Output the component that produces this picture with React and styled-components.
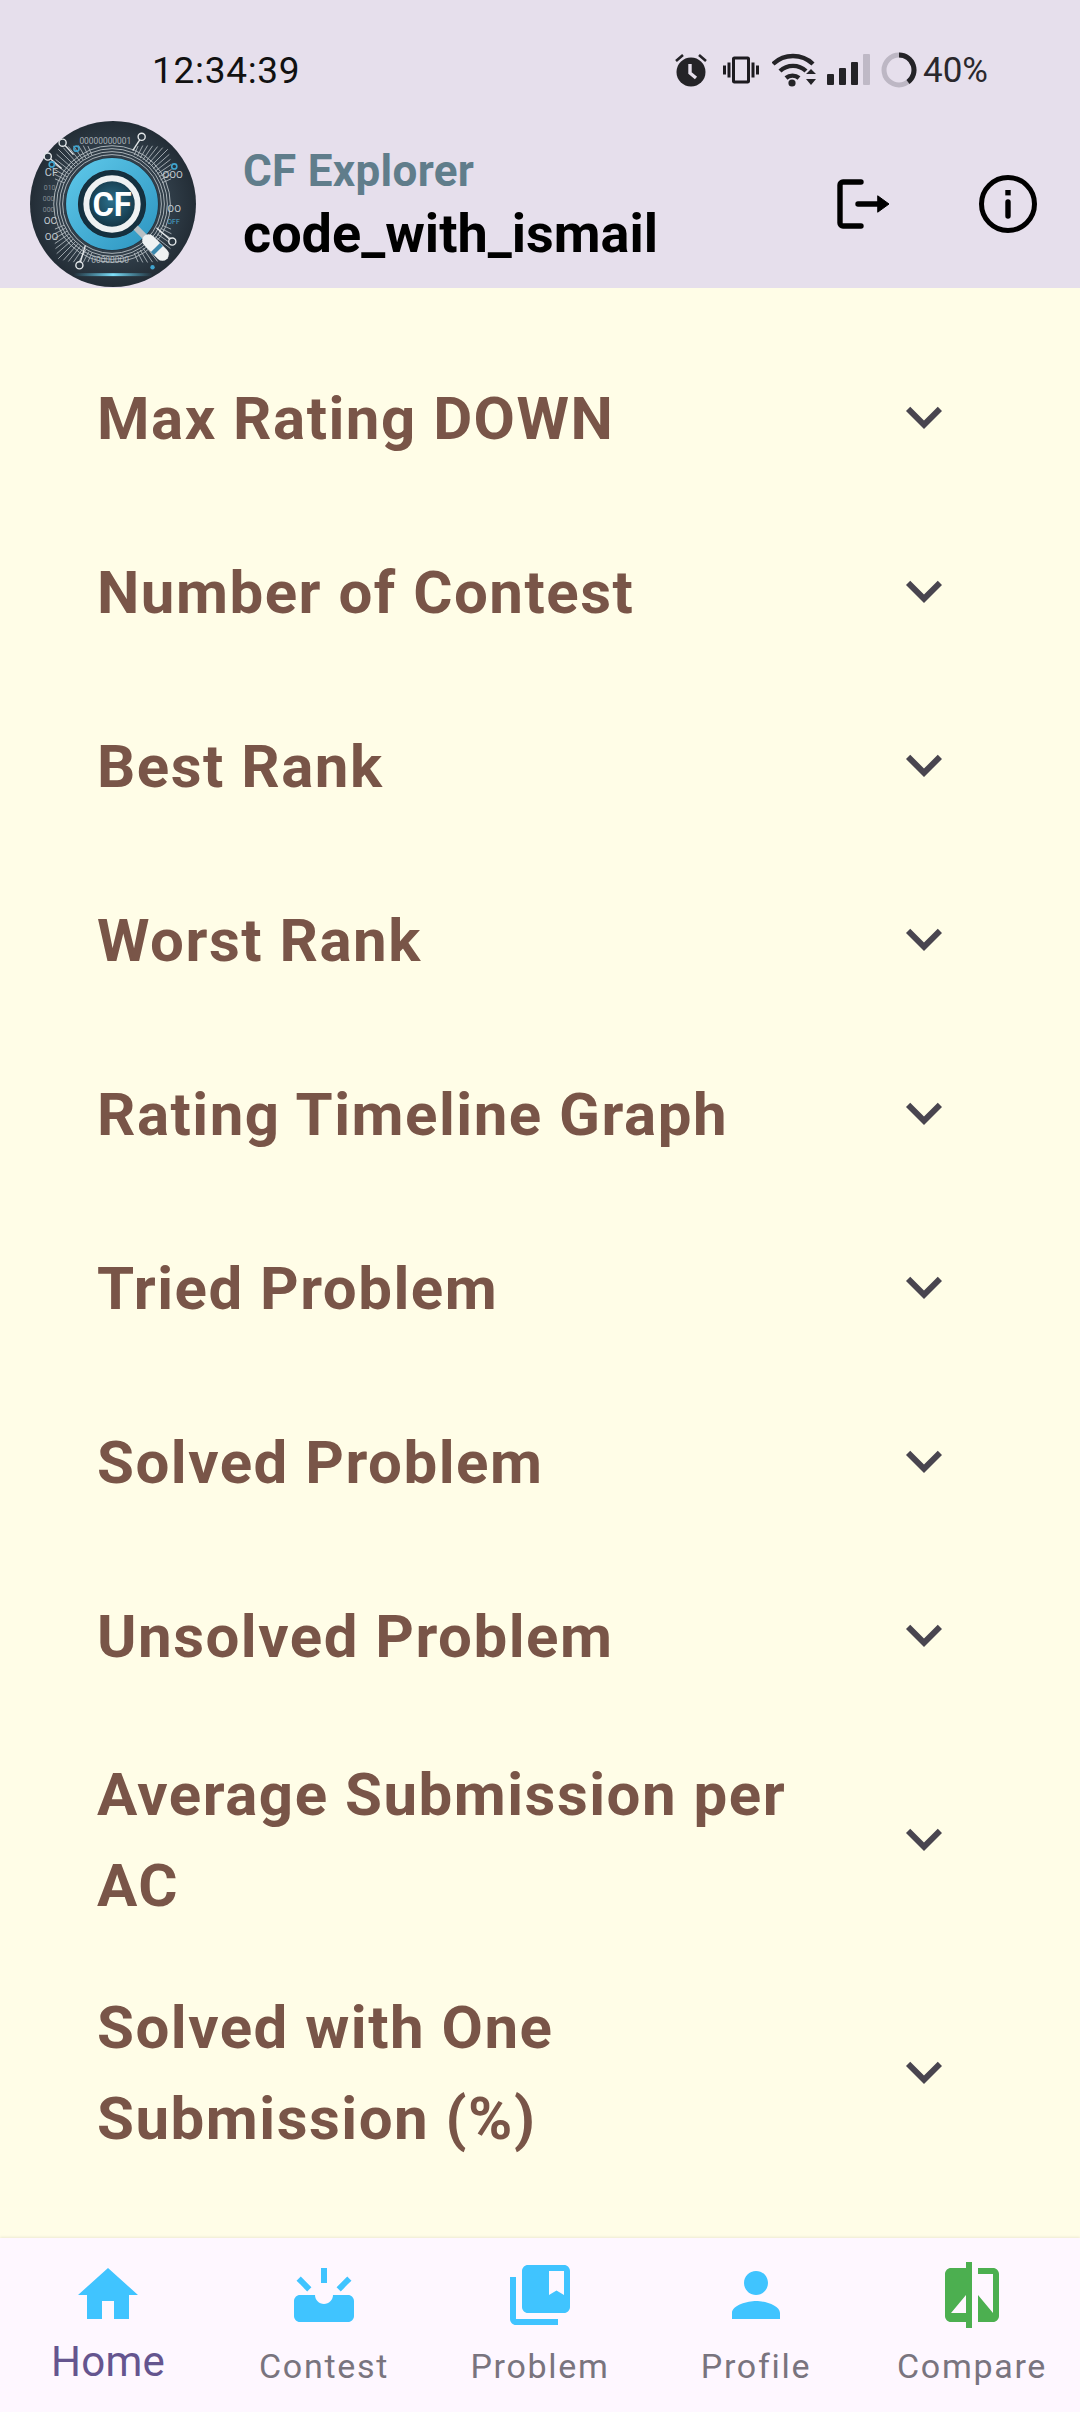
import React from 'react';
import styled, { createGlobalStyle } from 'styled-components';
import {
  MdHome,
  MdUpcoming,
  MdCollectionsBookmark,
  MdPerson,
  MdCompare,
  MdExpandMore,
  MdVibration,
} from 'react-icons/md';

const GlobalStyle = createGlobalStyle`
  html, body { margin: 0; padding: 0; }
  body { font-family: Roboto, "Liberation Sans", sans-serif; background: #fffde7; }
`;

const Page = styled.div`
  width: 1080px;
  height: 2412px;
  display: flex;
  flex-direction: column;
  overflow: hidden;
`;

const Top = styled.header`
  background: #e6dfec;
  height: 288px;
  flex: none;
`;

const StatusBar = styled.div`
  height: 100px;
  padding: 20px 92px 0 152px;
  display: flex;
  align-items: center;
  justify-content: space-between;
  color: #1d1b20;
`;

const Clock = styled.span`
  font-size: 37px;
  letter-spacing: 0.7px;
  color: #111;
`;

const StatusIcons = styled.div`
  display: flex;
  align-items: center;
`;

const StatusIcon = styled.svg`
  display: block;
  flex: none;
  margin-right: ${(p) => p.$gap}px;
`;

const VibrateIcon = styled(MdVibration)`
  display: block;
  flex: none;
  margin: 0 13px 0 -2px;
  color: #1d1b20;
`;

const Battery = styled.span`
  font-size: 35px;
  color: #2a282d;
`;

const AppBar = styled.div`
  height: 168px;
  padding: 0 36px 0 30px;
  display: flex;
  align-items: center;
`;

const LogoWrap = styled.div`
  width: 166px;
  height: 168px;
  flex: none;
  margin-right: 47px;
`;

const Titles = styled.div`
  flex: 1;
  display: flex;
  flex-direction: column;
  margin-top: -2px;
`;

const AppName = styled.div`
  font-size: 44px;
  font-weight: 700;
  line-height: 62px;
  letter-spacing: 0.3px;
  color: #607d8b;
`;

const UserName = styled.div`
  font-size: 54px;
  font-weight: 700;
  line-height: 64px;
  color: #000;
`;

const Actions = styled.div`
  display: flex;
  gap: 72px;
`;

const ActionIcon = styled.svg`
  display: block;
  width: 72px;
  height: 72px;
`;

const List = styled.main`
  flex: 1;
  padding-top: 42px;
  overflow: hidden;
`;

const Row = styled.div`
  min-height: 174px;
  box-sizing: border-box;
  padding: 24px 120px 24px 97px;
  display: flex;
  align-items: center;
  gap: 48px;
`;

const RowTitle = styled.div`
  flex: 1;
  padding-top: 3px;
  font-size: 60px;
  font-weight: 700;
  line-height: 91px;
  letter-spacing: 1.5px;
  color: #795548;
`;

const Chevron = styled(MdExpandMore)`
  flex: none;
  width: 72px;
  height: 72px;
  color: #49454f;
`;

const Nav = styled.nav`
  height: 174px;
  flex: none;
  background: #fef7ff;
  display: grid;
  grid-template-columns: repeat(5, 216px);
  box-shadow: 0 -1px 2px rgba(120, 110, 80, 0.12);
`;

const NavItem = styled.div`
  display: flex;
  flex-direction: column;
  align-items: center;
  padding-top: 21px;
  color: ${(p) => p.$color};

  svg {
    display: block;
    width: 72px;
    height: 72px;
    flex: none;
  }
`;

const NavLabel = styled.span`
  font-size: ${(p) => (p.$active ? 42 : 34)}px;
  letter-spacing: ${(p) => (p.$active ? 0.3 : 1.7)}px;
  line-height: 50px;
  margin-top: ${(p) => (p.$active ? 6 : 10)}px;
  color: ${(p) => (p.$active ? '#65558f' : '#79747e')};
`;

const rows = [
  'Max Rating DOWN',
  'Number of Contest',
  'Best Rank',
  'Worst Rank',
  'Rating Timeline Graph',
  'Tried Problem',
  'Solved Problem',
  'Unsolved Problem',
  'Average Submission per AC',
  'Solved with One Submission (%)',
];

const tabs = [
  { label: 'Home', Icon: MdHome, color: '#40c4ff', active: true },
  { label: 'Contest', Icon: MdUpcoming, color: '#40c4ff' },
  { label: 'Problem', Icon: MdCollectionsBookmark, color: '#40c4ff' },
  { label: 'Profile', Icon: MdPerson, color: '#40c4ff' },
  { label: 'Compare', Icon: MdCompare, color: '#4caf50' },
];

// hatch lines in the four diagonals of the logo
function hatch() {
  const out = [];
  [45, 135, 225, 315].forEach((mid) => {
    for (let i = -6; i <= 6; i++) {
      const a = ((mid + i * 3.6) * Math.PI) / 180;
      const r2 = 64 + (6 - Math.abs(i)) * 2.4;
      out.push(
        <line
          key={`${mid}${i}`}
          x1={84 + 54 * Math.cos(a)}
          y1={84 + 54 * Math.sin(a)}
          x2={84 + r2 * Math.cos(a)}
          y2={84 + r2 * Math.sin(a)}
          stroke="#aeb6bb"
          strokeWidth="0.9"
        />,
      );
    }
  });
  return out;
}

const nodes = [
  [33, 22, 44, 34],
  [113, 16, 104, 30],
  [18, 36, 32, 48],
  [144, 122, 128, 108],
  [50, 146, 56, 126],
];

const Logo = () => (
  <svg width="166" height="168" viewBox="0 0 168 168">
    <defs>
      <radialGradient id="bg" cx="50%" cy="50%" r="50%">
        <stop offset="0%" stopColor="#3c4a55" />
        <stop offset="70%" stopColor="#2f3c47" />
        <stop offset="100%" stopColor="#232d36" />
      </radialGradient>
      <linearGradient id="ring" x1="0" y1="0" x2="1" y2="1">
        <stop offset="0%" stopColor="#5cc6e8" />
        <stop offset="100%" stopColor="#2f97c2" />
      </linearGradient>
      <radialGradient id="lens" cx="50%" cy="45%" r="55%">
        <stop offset="0%" stopColor="#2b6f8b" />
        <stop offset="100%" stopColor="#12303f" />
      </radialGradient>
      <linearGradient id="glow" x1="0" y1="0" x2="1" y2="0">
        <stop offset="0%" stopColor="#4fc3e8" stopOpacity="0" />
        <stop offset="50%" stopColor="#7fe0fa" />
        <stop offset="100%" stopColor="#4fc3e8" stopOpacity="0" />
      </linearGradient>
    </defs>
    <circle cx="84" cy="84" r="84" fill="url(#bg)" />
    {hatch()}
    {[50, 53, 56, 59].map((r) => (
      <circle key={r} cx="83" cy="84" r={r} fill="none" stroke="#b9c1c6" strokeWidth="0.9" />
    ))}
    {nodes.map(([x, y, x2, y2]) => (
      <g key={`${x}${y}`} stroke="#e4e8ea" strokeWidth="1.4" fill="none">
        <line x1={x} y1={y} x2={x2} y2={y2} />
        <circle cx={x} cy={y} r="3.6" fill="#2a3640" />
      </g>
    ))}
    <g fontFamily="Roboto, sans-serif" fill="#c5ccd1">
      <text x="50" y="23" fontSize="8.5" opacity="0.8">00000000001</text>
      <text x="15" y="56" fontSize="11">CF</text>
      <text x="14" y="70" fontSize="7" opacity="0.55">010</text>
      <text x="13" y="81" fontSize="7" opacity="0.55">000</text>
      <text x="13" y="92" fontSize="7" opacity="0.55">000</text>
      <text x="14" y="104" fontSize="10">OC</text>
      <text x="15" y="120" fontSize="10">OO</text>
      <text x="134" y="58" fontSize="10">OOO</text>
      <text x="139" y="92" fontSize="10">OO</text>
      <text x="139" y="104" fontSize="7" fill="#4aa8cf">OFF</text>
      <text x="62" y="144" fontSize="8.5" opacity="0.8">00000000</text>
    </g>
    <circle cx="47" cy="28" r="2.6" fill="none" stroke="#3fa4cf" strokeWidth="1.6" />
    <circle cx="22" cy="44" r="2.6" fill="none" stroke="#3fa4cf" strokeWidth="1.6" />
    <circle cx="146" cy="46" r="2.6" fill="none" stroke="#3fa4cf" strokeWidth="1.6" />
    <circle cx="124" cy="148" r="2.2" fill="#3fa4cf" />
    <circle cx="83" cy="84" r="47" fill="#1b2a35" />
    <circle cx="83" cy="84" r="40.5" fill="none" stroke="url(#ring)" strokeWidth="12" />
    <circle cx="83" cy="84" r="34" fill="#14303f" />
    <line x1="107" y1="108" x2="120" y2="121" stroke="#b7c0c5" strokeWidth="6" />
    <line x1="120" y1="121" x2="134" y2="135" stroke="#eef1f2" strokeWidth="13" strokeLinecap="round" />
    <line x1="127" y1="128" x2="130" y2="131" stroke="#3b88ad" strokeWidth="13" />
    <circle cx="83" cy="84" r="26" fill="url(#lens)" stroke="#eef1f2" strokeWidth="6" />
    <text
      x="83"
      y="96"
      textAnchor="middle"
      fontFamily="Roboto, sans-serif"
      fontWeight="700"
      fontSize="33"
      fill="#fff"
    >
      CF
    </text>
    <rect x="44" y="154" width="80" height="3" fill="url(#glow)" />
  </svg>
);

const App = () => (
  <Page>
    <GlobalStyle />
    <Top>
      <StatusBar>
        <Clock>12:34:39</Clock>
        <StatusIcons>
          <StatusIcon width="32" height="34" viewBox="0 0 32 34" $gap={18}>
            <circle cx="16" cy="19" r="14.5" fill="#242327" />
            <path d="M15 11v9l6 5" fill="none" stroke="#e6dfec" strokeWidth="3.4" />
            <path d="M1 8l7-6M31 8l-7-6" stroke="#242327" strokeWidth="2.6" fill="none" />
          </StatusIcon>
          <VibrateIcon size={36} />
          <StatusIcon width="44" height="34" viewBox="0 0 44 34" $gap={11}>
            <g fill="none" stroke="#242327" strokeWidth="4.4">
              <path d="M1 11a29 29 0 0 1 40 0" />
              <path d="M8 18a19 19 0 0 1 26 0" />
              <path d="M14 25a10 10 0 0 1 13 0" />
            </g>
            <circle cx="20" cy="30" r="3.6" fill="#242327" />
            <path d="M34 21l5-5 5 5zM34 26l5 6 5-6z" fill="#242327" />
          </StatusIcon>
          <StatusIcon width="44" height="32" viewBox="0 0 44 32" $gap={10}>
            <rect x="0" y="20" width="7" height="11" rx="1" fill="#242327" />
            <rect x="12" y="14" width="7" height="17" rx="1" fill="#242327" />
            <rect x="24" y="8" width="7" height="23" rx="1" fill="#242327" />
            <rect x="36" y="0" width="7" height="31" rx="1" fill="#bfb9c6" />
          </StatusIcon>
          <StatusIcon width="36" height="36" viewBox="0 0 36 36" $gap={6}>
            <circle cx="18" cy="18" r="15" fill="none" stroke="#bdb7c4" strokeWidth="5" />
            <path d="M18 3a15 15 0 0 1 9 27" fill="none" stroke="#242327" strokeWidth="5" />
          </StatusIcon>
          <Battery>40%</Battery>
        </StatusIcons>
      </StatusBar>
      <AppBar>
        <LogoWrap>
          <Logo />
        </LogoWrap>
        <Titles>
          <AppName>CF Explorer</AppName>
          <UserName>code_with_ismail</UserName>
        </Titles>
        <Actions>
          <ActionIcon viewBox="0 0 72 72" fill="none" stroke="#000" strokeWidth="5.4" strokeLinecap="round" strokeLinejoin="round">
            <path d="M33 14H15a3 3 0 0 0-3 3v38a3 3 0 0 0 3 3h18" />
            <path d="M30 36h24" />
            <path d="M50 28l11 8-11 8z" fill="#000" strokeWidth="1" />
          </ActionIcon>
          <ActionIcon viewBox="0 0 72 72" fill="none" stroke="#000" strokeWidth="5">
            <circle cx="36" cy="36" r="26.5" />
            <path d="M36 34v14" strokeWidth="5.4" strokeLinecap="round" />
            <path d="M33.3 22h5.4v5.4h-5.4z" fill="#000" stroke="none" />
          </ActionIcon>
        </Actions>
      </AppBar>
    </Top>
    <List>
      {rows.map((title) => (
        <Row key={title}>
          <RowTitle>{title}</RowTitle>
          <Chevron />
        </Row>
      ))}
    </List>
    <Nav>
      {tabs.map(({ label, Icon, color, active }) => (
        <NavItem key={label} $color={color}>
          <Icon />
          <NavLabel $active={active}>{label}</NavLabel>
        </NavItem>
      ))}
    </Nav>
  </Page>
);

export default App;
